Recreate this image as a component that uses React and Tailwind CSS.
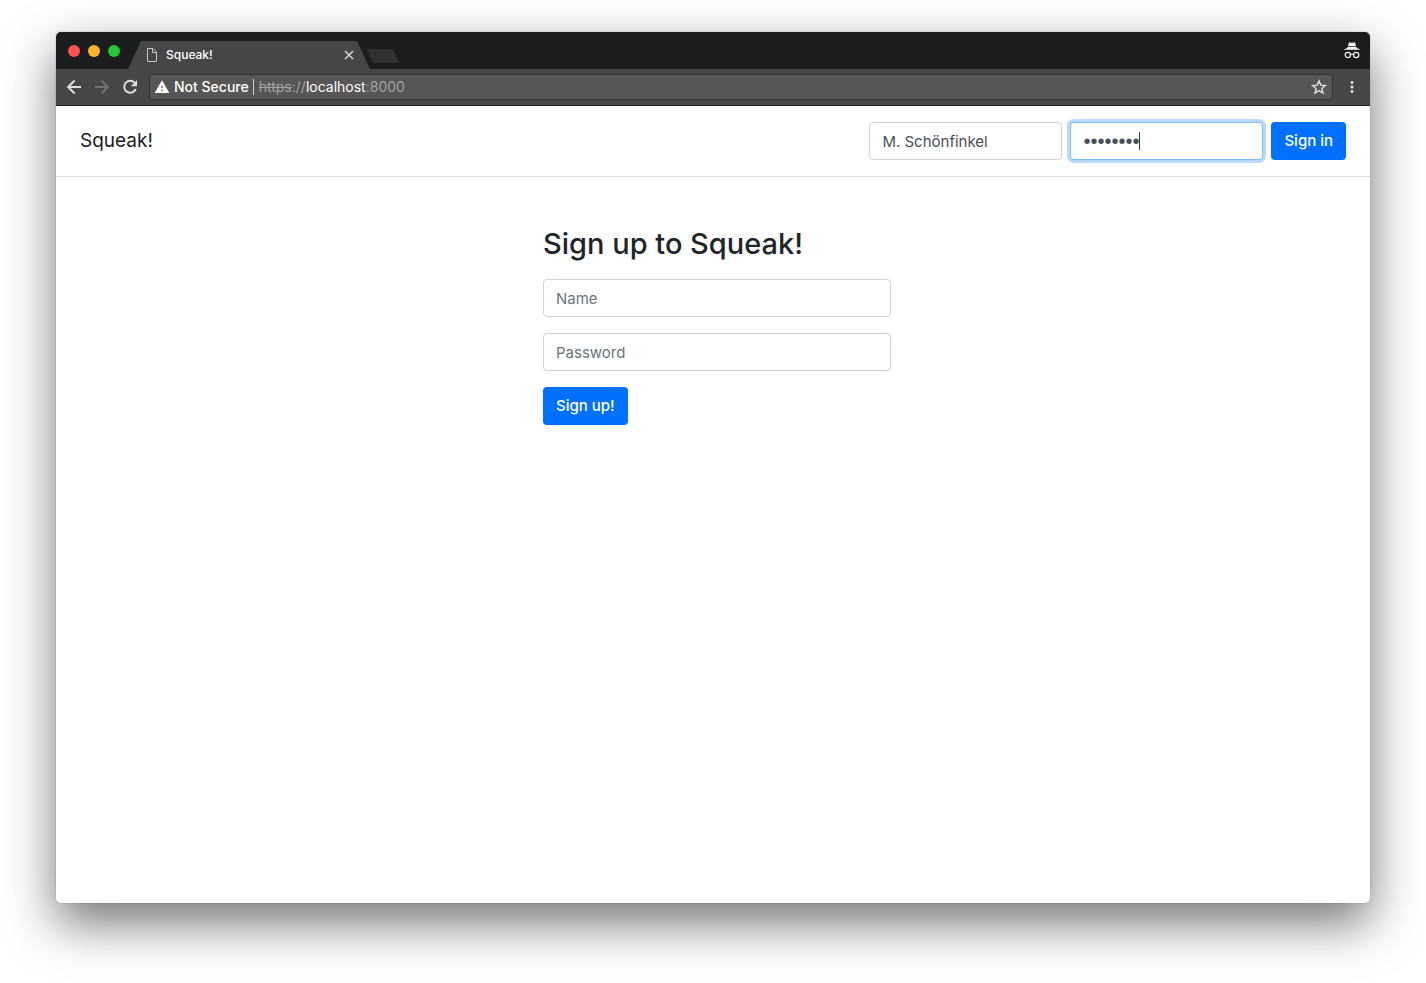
import React from "react";
import { MdMoreVert, MdWarning } from "react-icons/md";

function PageIcon() {
  return (
    <svg width="12" height="14" viewBox="0 0 12 14" fill="none" stroke="#c4c4c4" aria-hidden="true">
      <path d="M1.5 .5h5.500l3.500 3.500v9.500h-9z" />
      <path d="M6.500 .5v4h4" />
    </svg>
  );
}

function IncognitoIcon() {
  return (
    <svg width="18" height="18" viewBox="0 0 18 18" role="img" aria-label="Incognito">
      <path
        fill="#f3f3f3"
        d="M5.900 .7 Q6.200 .1 6.800 .3 L9 .9 L11.200 .3 Q11.800 .1 12.100 .7 L13.100 4.300 H4.900z M4.600 5 H13.400 L13.800 5.900 Q17 6.700 17.300 7.800 H.7 Q1 6.700 4.200 5.900z"
      />
      <g fill="none" stroke="#f3f3f3" strokeWidth="1.200">
        <circle cx="4.800" cy="13" r="2.600" />
        <circle cx="13.200" cy="13" r="2.600" />
        <path d="M7.400 12.700 Q9 11.600 10.600 12.700" />
      </g>
    </svg>
  );
}

function StrokeIcon({ children, size = 20, weight = 2 }) {
  return (
    <svg
      width={size}
      height={size}
      viewBox="0 0 20 20"
      fill="none"
      stroke="currentColor"
      strokeWidth={weight}
      aria-hidden="true"
    >
      {children}
    </svg>
  );
}

function TitleBar() {
  return (
    <header className="flex h-[37px] items-end bg-[#1b1c1e] pl-3 pr-[9px]">
      <div className="mb-3 flex gap-2">
        <button aria-label="Close window" className="size-3 rounded-full bg-[#ff5350]" />
        <button aria-label="Minimise window" className="size-3 rounded-full bg-[#ffb429]" />
        <button aria-label="Maximise window" className="size-3 rounded-full bg-[#25c738]" />
      </div>
      <div className="ml-2 flex h-7 w-[242px] items-center bg-[#464646] pl-[18px] pr-[11px] [clip-path:polygon(13px_0,229px_0,100%_100%,0_100%)]">
        <PageIcon />
        <span className="ml-2 flex-1 text-xs font-medium text-white">Squeak!</span>
        <button aria-label="Close tab" className="text-[#d2d2d2]">
          <StrokeIcon weight={1.6}>
            <path d="M6 6l8 8M14 6l-8 8" />
          </StrokeIcon>
        </button>
      </div>
      <button
        aria-label="New tab"
        className="-ml-[3px] mb-[6px] h-[14px] w-8 bg-[#303030] [clip-path:polygon(0_0,26px_0,100%_100%,6px_100%)]"
      />
      <div className="mb-[9px] ml-auto">
        <IncognitoIcon />
      </div>
    </header>
  );
}

function Toolbar() {
  return (
    <div className="flex h-[37px] items-center border-b border-[#252525] bg-[#464646] px-2 text-[#dedede]">
      <div className="flex gap-2">
        <button aria-label="Back">
          <StrokeIcon>
            <path d="M17 10H4.500M10.600 3.500L4.100 10l6.500 6.500" />
          </StrokeIcon>
        </button>
        <button aria-label="Forward" className="text-[#727272]">
          <StrokeIcon>
            <path d="M3 10h12.500M9.400 3.500l6.500 6.500-6.500 6.500" />
          </StrokeIcon>
        </button>
        <button aria-label="Reload">
          <StrokeIcon>
            <path d="M14.600 5.600A6 6 0 1 0 15.800 12" />
            <path d="M17 3v6.200h-6.200z" fill="currentColor" stroke="none" />
          </StrokeIcon>
        </button>
      </div>
      <div className="ml-[9px] flex h-[26px] flex-1 items-center rounded-[3px] border border-[#333] bg-[#565656] px-1 text-sm">
        <MdWarning size={16} className="text-white" />
        <span className="ml-1 font-medium text-white">Not Secure</span>
        <span className="ml-1 mr-[5px] h-4 w-px bg-[#cfcfcf]" />
        <span className="flex-1 text-[#a3a3a3]">
          <span className="line-through">https</span>://<span className="text-white">localhost</span>:8000
        </span>
        <button aria-label="Bookmark this page">
          <StrokeIcon size={18} weight={1.6}>
            <path d="M10 3.200l2 4.700 5.100.4-3.900 3.400 1.200 5-4.400-2.700-4.400 2.700 1.200-5-3.900-3.400 5.100-.4z" />
          </StrokeIcon>
        </button>
      </div>
      <button aria-label="Menu" className="ml-[10px] mr-px">
        <MdMoreVert size={18} />
      </button>
    </div>
  );
}

const field =
  "h-[38px] rounded border bg-white px-3 text-[#495057] outline-none placeholder:text-[#6c757d] placeholder:opacity-100";
const button = "h-[38px] rounded bg-[#0070ff] px-[13px] text-[15px] font-medium text-white";

function SignInBar() {
  return (
    <nav className="flex items-center justify-between border-b border-[#d5dce3] px-6 py-4">
      <a href="#home" className="text-[19px] text-[#1b1c1e]">
        Squeak!
      </a>
      <form className="flex gap-2" onSubmit={(e) => e.preventDefault()}>
        <input
          aria-label="Name"
          defaultValue="M. Schönfinkel"
          className={`${field} w-[193px] border-[#ced4da] text-[15px]`}
        />
        <div className="relative">
          <input
            type="password"
            aria-label="Password"
            defaultValue="combinat"
            className={`${field} w-[193px] border-[#80bdff] font-['Liberation_Sans',sans-serif] text-xl ring-3 ring-[#b8daff]`}
          />
          <span className="absolute left-[69px] top-[10px] h-[18px] w-px bg-[#343a40]" />
        </div>
        <button type="submit" className={button}>
          Sign in
        </button>
      </form>
    </nav>
  );
}

function SignUp() {
  return (
    <main className="flex justify-center pl-2 pt-12">
      <form className="flex w-[348px] flex-col items-start gap-4" onSubmit={(e) => e.preventDefault()}>
        <h1 className="text-[29px] font-medium leading-[38px] text-[#212529]">
          Sign up to Squeak!
        </h1>
        <input
          aria-label="Name"
          placeholder="Name"
          className={`${field} w-full border-[#ced4da] text-[15px]`}
        />
        <input
          type="password"
          aria-label="Password"
          placeholder="Password"
          className={`${field} w-full border-[#ced4da] text-[15px]`}
        />
        <button type="submit" className={button}>
          Sign up!
        </button>
      </form>
    </main>
  );
}

export default function App() {
  return (
    <div className="flex min-h-screen flex-col bg-white px-14 pb-20 pt-8 font-['Inter',sans-serif]">
      <div className="flex flex-1 flex-col rounded-[5px] shadow-[0_0_1px_rgba(0,0,0,0.6),0_20px_50px_rgba(0,0,0,0.55)]">
        <div className="flex flex-1 flex-col overflow-hidden rounded-[5px] bg-white">
          <TitleBar />
          <Toolbar />
          <SignInBar />
          <SignUp />
        </div>
      </div>
    </div>
  );
}
